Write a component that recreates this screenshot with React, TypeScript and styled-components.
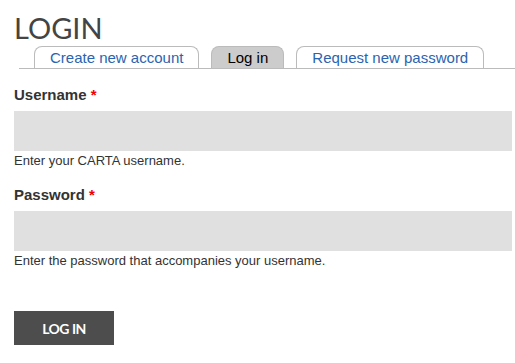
import React from 'react';
import styled, { createGlobalStyle } from 'styled-components';

const GlobalStyle = createGlobalStyle`
  body {
    margin: 0;
    background: #fff;
    font-family: 'Liberation Sans', Arial, sans-serif;
    color: #333;
  }
`;

const Page = styled.div`
  padding: 12px 3px 0 14px;
`;

const Title = styled.h1`
  margin: 0;
  font-family: Lato, 'Liberation Sans', sans-serif;
  font-weight: 400;
  font-size: 29px;
  line-height: 32px;
  color: #444;
`;

const TabBar = styled.ul`
  display: flex;
  gap: 12px;
  list-style: none;
  margin: 2px -3px 0 5px;
  padding: 0 0 0 15px;
  border-bottom: 1px solid #bbb;
`;

const Tab = styled.li<{ $active?: boolean }>`
  height: 21px;
  padding: 0 15px;
  border: 1px solid #bbb;
  border-bottom: none;
  border-radius: 8px 8px 0 0;
  background: ${(p) => (p.$active ? '#ccc' : '#fff')};
  color: ${(p) => (p.$active ? '#000' : '#2a64b0')};
  font-size: 15px;
  line-height: 22px;
  white-space: nowrap;
`;

const Form = styled.form`
  margin-top: 17px;
`;

const Field = styled.div`
  margin-bottom: 18px;
`;

const Label = styled.label`
  display: block;
  font-weight: 700;
  font-size: 15px;
  line-height: 17px;
  color: #333;
  margin-bottom: 8px;
`;

const Required = styled.span`
  color: #e00;
`;

const Input = styled.input`
  display: block;
  box-sizing: border-box;
  width: 498px;
  height: 40px;
  border: none;
  background: #e0e0e0;
  margin: 0;
  outline: none;
`;

const Help = styled.div`
  font-size: 13px;
  line-height: 15px;
  margin-top: 2px;
  color: #333;
`;

const Submit = styled.button`
  margin-top: 25px;
  width: 100px;
  height: 34px;
  border: none;
  background: #4d4d4d;
  color: #fff;
  font-family: Lato, 'Liberation Sans', sans-serif;
  font-weight: 700;
  font-size: 14px;
  letter-spacing: -0.5px;
`;

export default function App() {
  return (
    <Page>
      <GlobalStyle />
      <Title>LOGIN</Title>
      <TabBar>
        <Tab>Create new account</Tab>
        <Tab $active>Log in</Tab>
        <Tab>Request new password</Tab>
      </TabBar>
      <Form onSubmit={(e) => e.preventDefault()}>
        <Field>
          <Label htmlFor='edit-name'>
            Username <Required>*</Required>
          </Label>
          <Input id='edit-name' type='text' />
          <Help>Enter your CARTA username.</Help>
        </Field>
        <Field>
          <Label htmlFor='edit-pass'>
            Password <Required>*</Required>
          </Label>
          <Input id='edit-pass' type='password' />
          <Help>Enter the password that accompanies your username.</Help>
        </Field>
        <Submit type='submit'>LOG IN</Submit>
      </Form>
    </Page>
  );
}
